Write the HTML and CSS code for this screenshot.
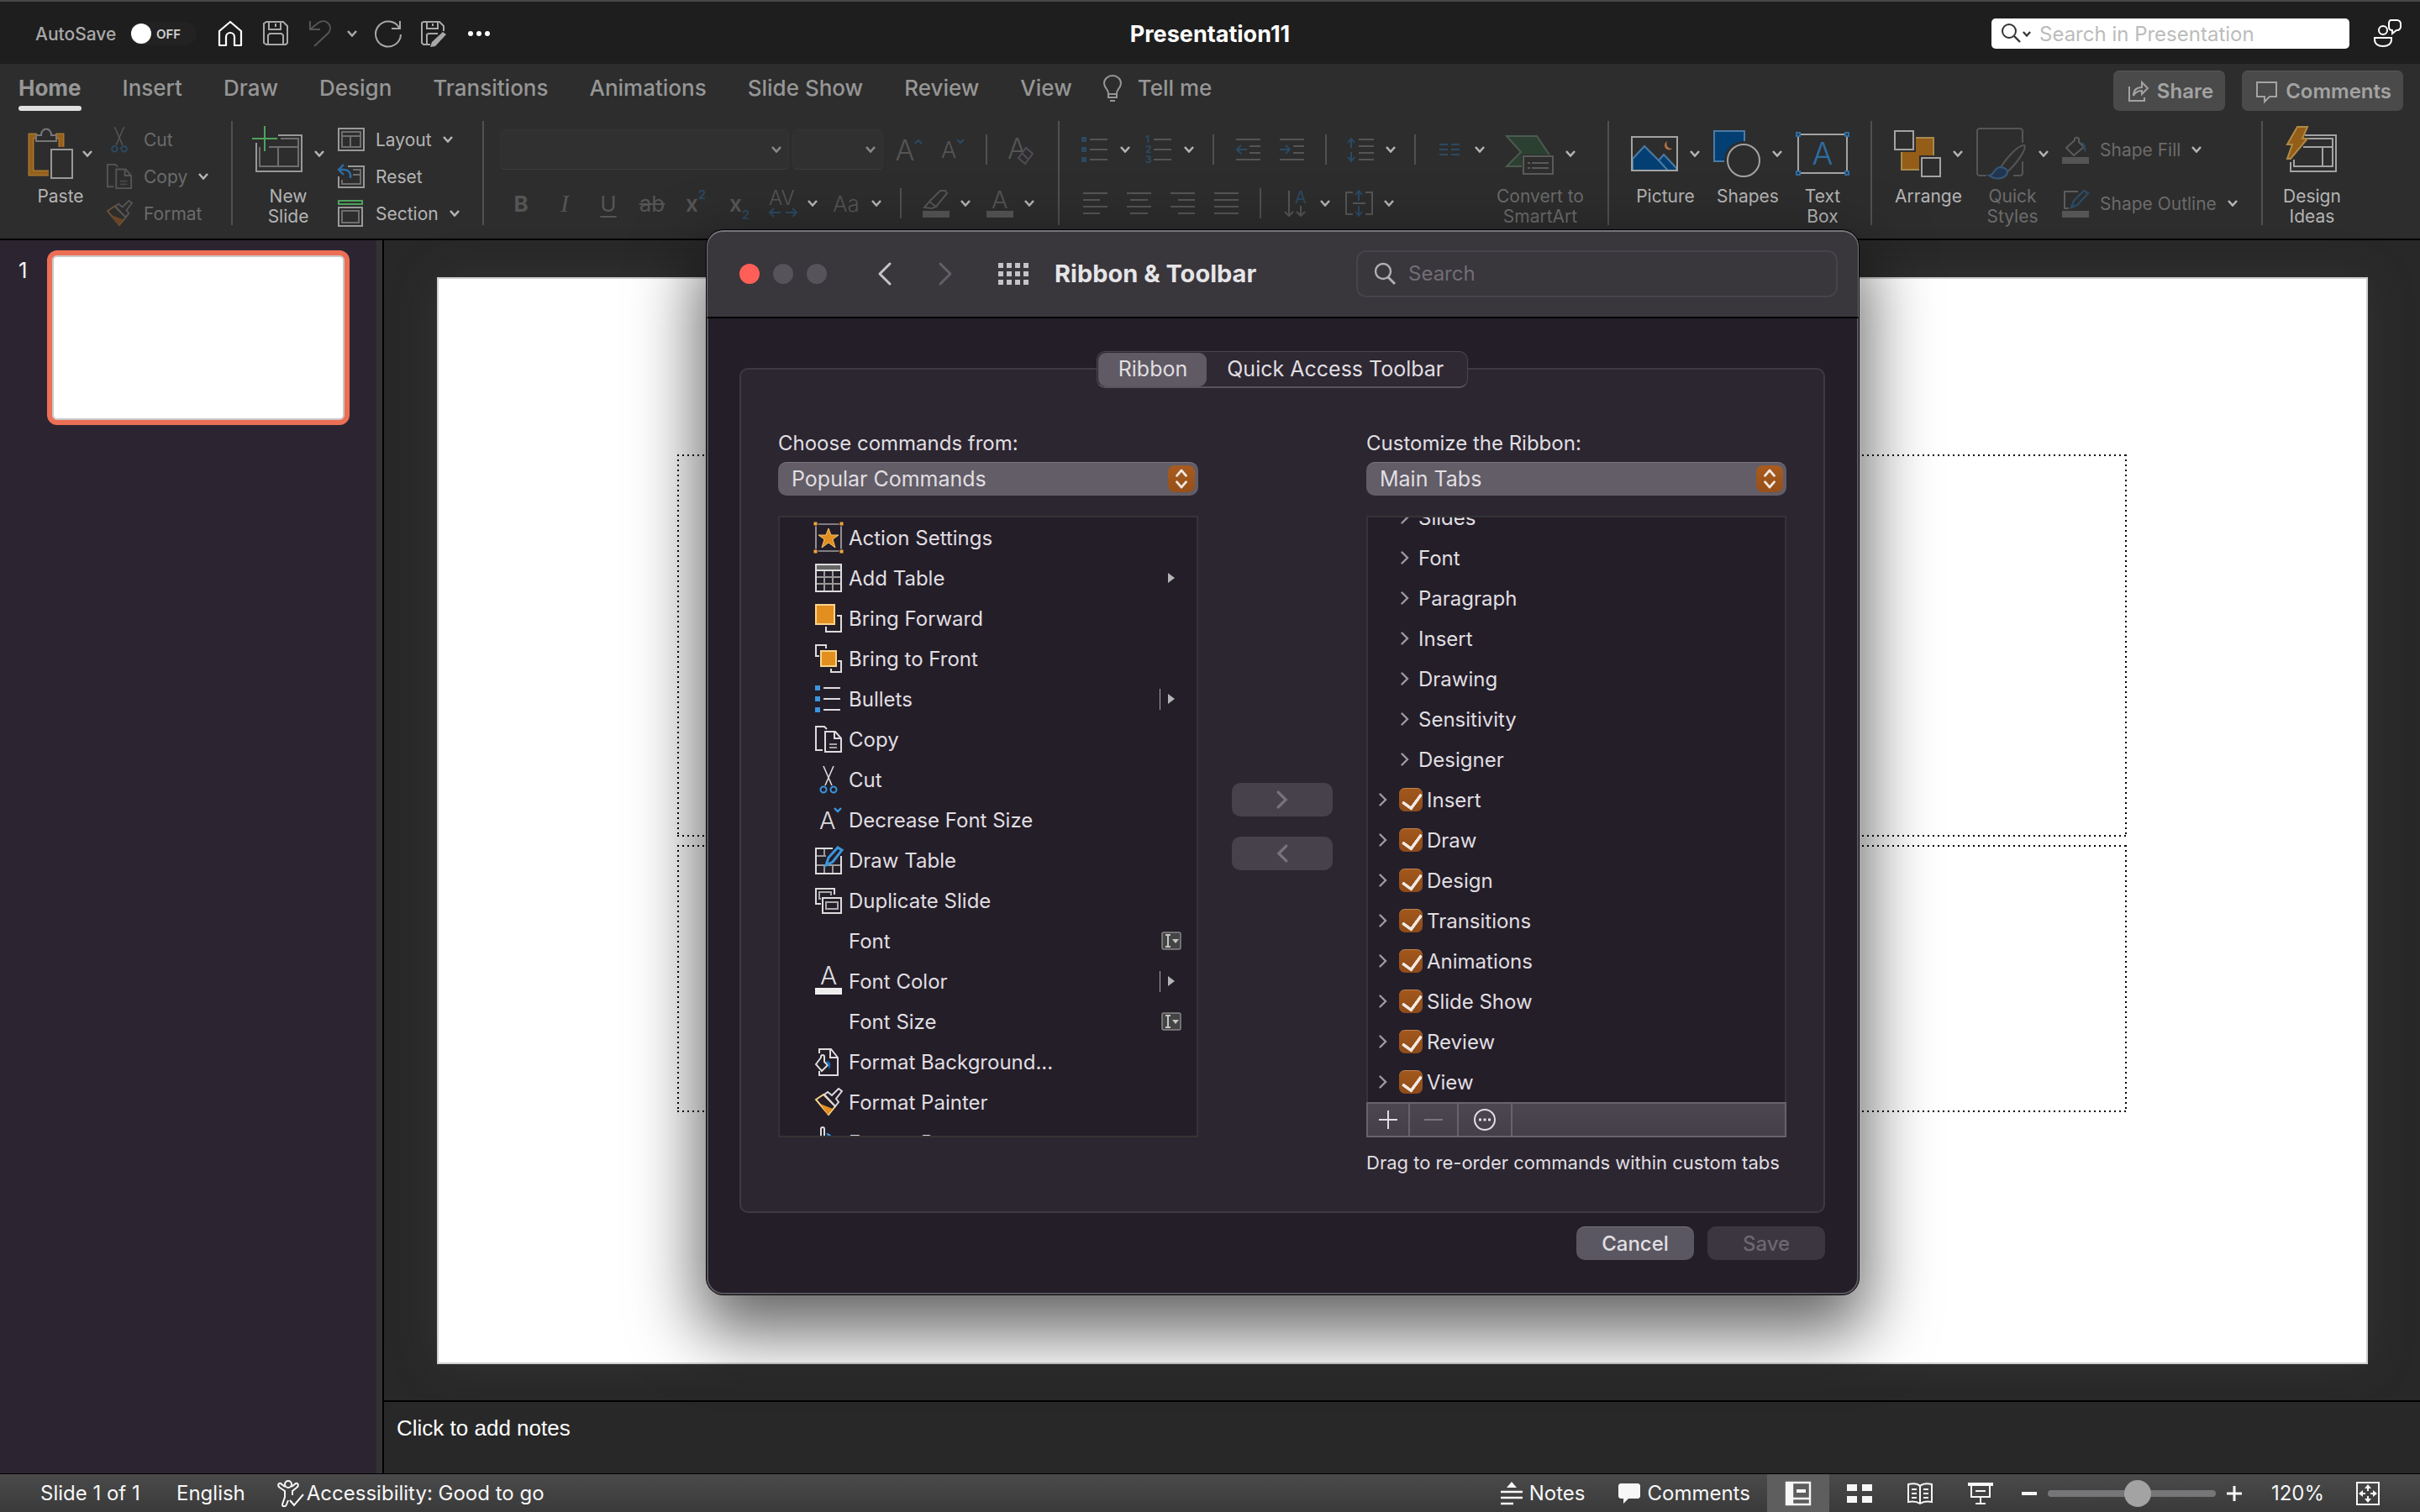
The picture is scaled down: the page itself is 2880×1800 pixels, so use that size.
FILE: index.html
```html
<!DOCTYPE html>
<html lang="en">

<head>
    <meta charset="UTF-8">
    <meta name="viewport" content="width=device-width, initial-scale=1.0">
    <title>Presentation11</title>
    <link rel="stylesheet" href="styles.css">
</head>

<body>

    <!-- Shared icons -->
    <svg class="sprite" width="0" height="0">
        <symbol id="chev" viewBox="0 0 12 8"><path d="M1 1l5 5.500 5-5.500" fill="none" stroke="currentColor" stroke-width="2.600"/></symbol>
        <symbol id="arrow" viewBox="0 0 10 16"><path d="M1.500 1.500l6.500 6.500-6.500 6.500" fill="none" stroke="currentColor" stroke-width="2.400" stroke-linecap="round"/></symbol>
        <symbol id="updown" viewBox="0 0 16 26"><path d="M2 9l6-7 6 7M2 17l6 7 6-7" fill="none" stroke="currentColor" stroke-width="3" stroke-linecap="round" stroke-linejoin="round"/></symbol>
        <symbol id="copy" viewBox="0 0 34 34"><path d="M10 30H2V2h10l3 3M13 8h12l7 8v16H13zM24 8v8h8" fill="none" stroke="currentColor" stroke-width="2"/><path d="M18 23h9M18 27h9" stroke="currentColor" stroke-width="2" opacity=".7"/></symbol>
        <symbol id="cut" viewBox="0 0 34 34"><path d="M11 1l10 23M23 1L13 24" fill="none" stroke="currentColor" stroke-width="1.600"/><circle cx="11" cy="29" r="3.500" fill="none" stroke="var(--blue)" stroke-width="2"/><circle cx="23" cy="29" r="3.500" fill="none" stroke="var(--blue)" stroke-width="2"/></symbol>
        <symbol id="painter" viewBox="0 0 34 34"><path d="M2 14l9-6 14 14-8 10z" fill="none" stroke="var(--gold)" stroke-width="2"/><path d="M7 19l15 6-6 7z" fill="var(--orange)"/><path d="M12 8l4-3 5 4 8-8 4 3-7 9 3 4-4 5z" fill="var(--bg)" stroke="currentColor" stroke-width="2"/></symbol>
        <symbol id="combo" viewBox="0 0 24 22"><rect x="1" y="1" width="22" height="20" rx="2" fill="#444" stroke="#868686" stroke-width="1.500"/><path d="M5 4h6M5 18h6M8 4v14" stroke="#c4c4c4" stroke-width="2"/><path d="M13 9h8l-4 5z" fill="#c4c4c4"/></symbol>
    </svg>

    <!-- Title bar -->
    <header class="titlebar">
        <div class="quick-access">
            <label class="autosave" for="autosave">AutoSave</label>
            <button class="toggle" id="autosave" type="button"><span class="knob"></span>OFF</button>
            <button class="qa bright" type="button" aria-label="Home"><svg width="30" height="32" viewBox="0 0 30 32"><path d="M2 13L15 2l13 11v17h-8V20a5 5 0 0 0-10 0v10H2z" fill="none" stroke="currentColor" stroke-width="2.200" stroke-linejoin="round"/></svg></button>
            <button class="qa" type="button" aria-label="Save"><svg width="30" height="30" viewBox="0 0 30 30"><path d="M4 1h20l5 5v20l-2 2H4l-3-2V3zM7 1v9h14V1M15 3v4M6 28V17l2-2h14l2 2v11" fill="none" stroke="currentColor" stroke-width="2"/></svg></button>
            <button class="qa dim" type="button" aria-label="Undo"><svg width="30" height="34" viewBox="0 0 30 34"><path d="M2 2v10h12M2 12L12 4c9-6 18 4 12 12L7 32" fill="none" stroke="currentColor" stroke-width="2"/></svg></button>
            <button class="qa narrow" type="button" aria-label="Undo history"><svg width="12" height="8"><use href="#chev"/></svg></button>
            <button class="qa" type="button" aria-label="Redo"><svg width="34" height="34" viewBox="0 0 34 34"><path d="M31 2v9H21M30 10A15 15 0 1 0 32 18" fill="none" stroke="currentColor" stroke-width="2"/></svg></button>
            <button class="qa" type="button" aria-label="Save as"><svg width="32" height="32" viewBox="0 0 32 32"><path d="M12 29H4l-2-2V3l2-1h19l5 5v6M8 2v8h13V2M15 4v3M8 29V17l2-1h11" fill="none" stroke="currentColor" stroke-width="2"/><path d="M27 14l4 3-13 14-6 1 2-6z" fill="currentColor"/></svg></button>
            <button class="qa bright" type="button" aria-label="More"><svg width="28" height="8" viewBox="0 0 28 8"><circle cx="4" cy="4" r="3"/><circle cx="14" cy="4" r="3"/><circle cx="24" cy="4" r="3"/></svg></button>
        </div>
        <h1 class="doc-title">Presentation11</h1>
        <div class="title-right">
            <label class="doc-search">
                <svg width="24" height="24" viewBox="0 0 24 24"><circle cx="10" cy="9" r="8" fill="none" stroke="#333" stroke-width="2"/><path d="M16 15l7 7" stroke="#333" stroke-width="2.400"/></svg>
                <svg width="10" height="7"><use href="#chev"/></svg>
                <input type="text" placeholder="Search in Presentation" aria-label="Search in Presentation">
            </label>
            <button class="people" type="button" aria-label="Share feedback"><svg width="34" height="34" viewBox="0 0 34 34"><g fill="none" stroke="currentColor" stroke-width="2"><circle cx="12" cy="13" r="5"/><path d="M2 22h20v2c0 5-4 8-10 8S2 29 2 24zM21 1h8c2 0 4 2 4 4v4c0 2-2 4-4 4h-1l-5 4v-4c-3 0-4-2-4-4V5c0-2 1-4 2-4z"/></g></svg></button>
        </div>
    </header>

    <!-- Ribbon -->
    <section class="ribbon">
        <nav class="tabs">
            <a class="tab active" href="#">Home</a>
            <a class="tab" href="#">Insert</a>
            <a class="tab" href="#">Draw</a>
            <a class="tab" href="#">Design</a>
            <a class="tab" href="#">Transitions</a>
            <a class="tab" href="#">Animations</a>
            <a class="tab" href="#">Slide Show</a>
            <a class="tab" href="#">Review</a>
            <a class="tab" href="#">View</a>
            <a class="tab tell" href="#"><svg width="24" height="32" viewBox="0 0 24 32"><path d="M7 22c0-5-5-6-5-12a10 9 0 0 1 20 0c0 6-5 7-5 12v5H7zM7 23h10M9 31h6" fill="none" stroke="currentColor" stroke-width="2"/></svg>Tell me</a>
            <div class="tab-actions">
                <button class="pill" type="button"><svg width="26" height="26" viewBox="0 0 26 26"><path d="M2 7v17h18v-4M7 18c0-7 4-10 10-10V2l7 7-7 7v-4c-5 0-8 2-10 6z" fill="none" stroke="currentColor" stroke-width="2"/></svg>Share</button>
                <button class="pill" type="button"><svg width="26" height="26" viewBox="0 0 26 26"><path d="M1 2h23v17h-8l-6 6v-6H1z" fill="none" stroke="currentColor" stroke-width="2"/></svg>Comments</button>
            </div>
        </nav>

        <div class="groups">
            <div class="group clipboard">
                <button class="big" type="button">
                    <span class="big-icon"><svg width="54" height="62" viewBox="0 0 54 62"><path d="M24 54H3V10h7M32 10h7v13" fill="none" stroke="#a8762f" stroke-width="7"/><path d="M24 54H3V10h7M32 10h7v13" fill="none" stroke="#94601c" stroke-width="4"/><path d="M9 16V9h6c0-10 12-10 12 0h6v7z" fill="#2d2d2d" stroke="#777" stroke-width="2"/><path d="M27 26h25v34H27z" fill="#2d2d2d" stroke="#999" stroke-width="2"/></svg><svg width="12" height="8"><use href="#chev"/></svg></span>
                    <span>Paste</span>
                </button>
                <div class="stack">
                    <button class="small off" type="button"><svg width="32" height="32"><use href="#cut"/></svg>Cut</button>
                    <button class="small off" type="button"><svg width="32" height="32"><use href="#copy"/></svg>Copy<svg class="caret" width="12" height="8"><use href="#chev"/></svg></button>
                    <button class="small off" type="button"><svg width="32" height="32"><use href="#painter"/></svg>Format</button>
                </div>
            </div>

            <div class="group slides">
                <button class="big" type="button">
                    <span class="big-icon"><svg width="60" height="66" viewBox="0 0 60 66"><path d="M31 11h28v43H5V20" fill="none" stroke="#999" stroke-width="2"/><path d="M34 15h21v33H9V25M20 25h35M31 25v23" fill="none" stroke="#6e6e6e" stroke-width="2"/><path d="M15 0v30M0 15h30" stroke="#4fa25c" stroke-width="2"/></svg><svg width="12" height="8"><use href="#chev"/></svg></span>
                    <span>New<br>Slide</span>
                </button>
                <div class="stack">
                    <button class="small" type="button"><svg width="32" height="28" viewBox="0 0 32 28"><path d="M1 1h30v26H1z" fill="none" stroke="#999" stroke-width="2"/><path d="M5 5h22v18H5zM5 10h22M15 10v13" fill="none" stroke="#6e6e6e" stroke-width="2"/></svg>Layout<svg class="caret" width="12" height="8"><use href="#chev"/></svg></button>
                    <button class="small" type="button"><svg width="32" height="30" viewBox="0 0 32 30"><path d="M12 3h19v25H1V15" fill="none" stroke="#999" stroke-width="2"/><path d="M18 7h9v17H5v-5M18 13h9" fill="none" stroke="#6e6e6e" stroke-width="2"/><path d="M7 1L1 7l6 6M1 7h6c6 0 9 4 8 10" fill="none" stroke="#2d6da3" stroke-width="2.400"/></svg>Reset</button>
                    <button class="small" type="button"><svg width="32" height="32" viewBox="0 0 32 32"><path d="M1 1h28v4H1z" fill="none" stroke="#4fa25c" stroke-width="2"/><path d="M1 9h28v22H1z" fill="none" stroke="#999" stroke-width="2"/><path d="M5 13h20v14H5z" fill="none" stroke="#6e6e6e" stroke-width="2"/></svg>Section<svg class="caret" width="12" height="8"><use href="#chev"/></svg></button>
                </div>
            </div>

            <div class="group font">
                <div class="tools">
                    <div class="tool-row">
                        <div class="fields">
                            <button class="field face" type="button" aria-label="Font name"><svg width="12" height="8"><use href="#chev"/></svg></button>
                            <button class="field size" type="button" aria-label="Font size"><svg width="12" height="8"><use href="#chev"/></svg></button>
                        </div>
                        <button class="tool grow" type="button">A<svg width="10" height="7" viewBox="0 0 10 7"><path d="M1 6l4-4 4 4" fill="none" stroke="#2c4a63" stroke-width="2"/></svg></button>
                        <button class="tool shrink" type="button">A<svg width="10" height="7" viewBox="0 0 10 7"><path d="M1 1l4 4 4-4" fill="none" stroke="#2c4a63" stroke-width="2"/></svg></button>
                        <i class="rule"></i>
                        <button class="tool" type="button" aria-label="Clear formatting"><svg width="34" height="34" viewBox="0 0 34 34"><text class="glyph" x="0" y="28" font-size="34">A</text><path d="M13 27l9-12 8 7-9 12zM17 21l7 7" fill="#2d2d2d" stroke="#524a56" stroke-width="2"/></svg></button>
                    </div>
                    <div class="tool-row">
                        <button class="tool bold" type="button">B</button>
                        <button class="tool italic" type="button">I</button>
                        <button class="tool under" type="button">U</button>
                        <button class="tool strike" type="button">ab</button>
                        <button class="tool script" type="button">x<sup>2</sup></button>
                        <button class="tool script" type="button">x<sub>2</sub></button>
                        <button class="drop" type="button"><svg width="34" height="34" viewBox="0 0 34 34"><text class="glyph" x="0" y="19" font-size="24">AV</text><path d="M1 28h13M6 23l-5 5 5 5M33 28H20M28 23l5 5-5 5" fill="none" stroke="#2c4a63" stroke-width="2"/></svg><svg width="12" height="8"><use href="#chev"/></svg></button>
                        <button class="drop" type="button"><svg width="34" height="34" viewBox="0 0 34 34"><text class="glyph" x="0" y="27" font-size="26">Aa</text></svg><svg width="12" height="8"><use href="#chev"/></svg></button>
                        <i class="rule"></i>
                        <button class="drop" type="button"><svg width="34" height="34" viewBox="0 0 34 34"><path d="M3 22l6-7 8 6-5 2zM9 15L22 2h6l2 3-13 16z" fill="none" stroke="#555" stroke-width="2"/><path d="M1 26h32v8H1z" fill="#555"/></svg><svg width="12" height="8"><use href="#chev"/></svg></button>
                        <button class="drop" type="button"><svg width="34" height="34" viewBox="0 0 34 34"><text class="glyph" x="7" y="23" font-size="29">A</text><path d="M1 26h32v8H1z" fill="#555"/></svg><svg width="12" height="8"><use href="#chev"/></svg></button>
                    </div>
                </div>
            </div>

            <div class="group paragraph">
                <div class="tools">
                    <div class="tool-row">
                        <button class="drop" type="button"><svg width="34" height="34" viewBox="0 0 34 34"><path d="M0 2h6v6H0zM0 14h6v6H0zM0 26h6v6H0z" fill="#2c4a63"/><path d="M10 5h21M10 17h21M10 29h21" stroke="#555" stroke-width="2"/></svg><svg width="12" height="8"><use href="#chev"/></svg></button>
                        <button class="drop" type="button"><svg width="34" height="34" viewBox="0 0 34 34"><g fill="#2c4a63" font-size="12" font-weight="700"><text x="0" y="9">1</text><text x="0" y="21">2</text><text x="0" y="33">3</text></g><path d="M10 5h21M10 17h21M10 29h21" stroke="#555" stroke-width="2"/></svg><svg width="12" height="8"><use href="#chev"/></svg></button>
                        <i class="rule"></i>
                        <button class="tool" type="button" aria-label="Outdent"><svg width="34" height="34" viewBox="0 0 34 34"><path d="M2 5h29M18 13h13M18 21h13M2 29h29" stroke="#555" stroke-width="2"/><path d="M15 17H3M8 12l-5 5 5 5" fill="none" stroke="#2c4a63" stroke-width="2"/></svg></button>
                        <button class="tool" type="button" aria-label="Indent"><svg width="34" height="34" viewBox="0 0 34 34"><path d="M2 5h29M18 13h13M18 21h13M2 29h29" stroke="#555" stroke-width="2"/><path d="M2 17h12M9 12l5 5-5 5" fill="none" stroke="#2c4a63" stroke-width="2"/></svg></button>
                        <i class="rule"></i>
                        <button class="drop" type="button"><svg width="34" height="34" viewBox="0 0 34 34"><path d="M14 5h18M14 13h18M14 21h18M14 29h18" stroke="#555" stroke-width="2"/><path d="M5 5v10M1 9l4-5 4 5M5 20v11M1 26l4 5 4-5" fill="none" stroke="#2c4a63" stroke-width="2"/></svg><svg width="12" height="8"><use href="#chev"/></svg></button>
                        <i class="rule"></i>
                        <button class="drop" type="button"><svg width="34" height="34" viewBox="0 0 34 34"><path d="M4 11h10M4 17h10M4 23h10M18 11h10M18 17h10M18 23h10" stroke="#2c4a63" stroke-width="2"/></svg><svg width="12" height="8"><use href="#chev"/></svg></button>
                    </div>
                    <div class="tool-row">
                        <button class="tool" type="button" aria-label="Align left"><svg width="34" height="34" viewBox="0 0 34 34"><path d="M2 5h29M2 13h20M2 21h29M2 29h20" stroke="#555" stroke-width="2"/></svg></button>
                        <button class="tool" type="button" aria-label="Center"><svg width="34" height="34" viewBox="0 0 34 34"><path d="M2 5h29M6 13h21M2 21h29M6 29h21" stroke="#555" stroke-width="2"/></svg></button>
                        <button class="tool" type="button" aria-label="Align right"><svg width="34" height="34" viewBox="0 0 34 34"><path d="M2 5h29M11 13h20M2 21h29M11 29h20" stroke="#555" stroke-width="2"/></svg></button>
                        <button class="tool" type="button" aria-label="Justify"><svg width="34" height="34" viewBox="0 0 34 34"><path d="M2 5h29M2 13h29M2 21h29M2 29h29" stroke="#555" stroke-width="2"/></svg></button>
                        <i class="rule"></i>
                        <button class="drop" type="button"><svg width="34" height="34" viewBox="0 0 34 34"><path d="M9 2v30M4 27l5 5 5-5M23 20v12M18 27l5 5 5-5" fill="none" stroke="#555" stroke-width="2"/><text x="16" y="17" font-size="20" fill="#2c4a63">A</text></svg><svg width="12" height="8"><use href="#chev"/></svg></button>
                        <button class="drop" type="button"><svg width="34" height="34" viewBox="0 0 34 34"><path d="M9 4H1v26h8M24 4h8v26h-8M9 17h15" fill="none" stroke="#555" stroke-width="2"/><path d="M16 2v12M12 7l4-5 4 5M16 20v12M12 27l4 5 4-5" fill="none" stroke="#2c4a63" stroke-width="2"/></svg><svg width="12" height="8"><use href="#chev"/></svg></button>
                    </div>
                </div>
                <button class="big off smartart" type="button">
                    <span class="big-icon"><svg width="58" height="50" viewBox="0 0 58 50"><path d="M2 4h36l16 24v12H20V40H2l17-17z" fill="#2b4030" stroke="#4d5a50" stroke-width="2"/><path d="M20 26h38v24H20z" fill="#2d2d2d"/><path d="M22 28h35v21H22z" fill="#2d2d2d" stroke="#5a5a5a" stroke-width="2"/><path d="M27 36h3M32 36h20M27 42h3M32 42h20" stroke="#5a5a5a" stroke-width="2"/></svg><svg width="12" height="8"><use href="#chev"/></svg></span>
                    <span>Convert to<br>SmartArt</span>
                </button>
            </div>

            <div class="group insert">
                <button class="big" type="button">
                    <span class="big-icon"><svg width="56" height="42" viewBox="0 0 56 42"><path d="M2 27l14-15 17 17 6-7 15 16v3H2z" fill="#043f73" stroke="#4b7ba5" stroke-width="2"/><path d="M33 29l11 12" stroke="#4b7ba5" stroke-width="2"/><path d="M1 1h54v40H1z" fill="none" stroke="#a3a3a3" stroke-width="2"/><path d="M43 6c-2 5 1 9 6 9-3 3-9 1-9-4 0-2 1-4 3-5z" fill="#b87142"/></svg><svg width="12" height="8"><use href="#chev"/></svg></span>
                    <span>Picture</span>
                </button>
                <button class="big" type="button">
                    <span class="big-icon"><svg width="56" height="56" viewBox="0 0 56 56"><path d="M1 1h36v36H1z" fill="#043f73" stroke="#4b7ba5" stroke-width="2"/><circle cx="36" cy="36" r="23" fill="#2d2d2d"/><circle cx="36" cy="36" r="19" fill="none" stroke="#a3a3a3" stroke-width="2"/></svg><svg width="12" height="8"><use href="#chev"/></svg></span>
                    <span>Shapes</span>
                </button>
                <button class="big" type="button">
                    <span class="big-icon"><svg width="64" height="52" viewBox="0 0 64 52"><path d="M3 3h58v46H3z" fill="none" stroke="#a3a3a3" stroke-width="2"/><path d="M1 1h4v4H1zM59 1h4v4h-4zM1 47h4v4H1zM59 47h4v4h-4z" fill="#2d2d2d" stroke="#2d6da3" stroke-width="2"/><text x="32" y="39" text-anchor="middle" font-size="37" font-weight="300" fill="#2d6da3">A</text></svg></span>
                    <span>Text<br>Box</span>
                </button>
            </div>

            <div class="group drawing">
                <button class="big" type="button">
                    <span class="big-icon"><svg width="56" height="56" viewBox="0 0 56 56"><path d="M9 9h38v38H9z" fill="#945d18" stroke="#a58a4e" stroke-width="2"/><path d="M0 0h26v26H0zM30 30h26v26H30z" fill="#2d2d2d"/><path d="M1 1h22v22H1zM33 33h22v22H33z" fill="#2d2d2d" stroke="#a3a3a3" stroke-width="2"/></svg><svg width="12" height="8"><use href="#chev"/></svg></span>
                    <span>Arrange</span>
                </button>
                <button class="big off" type="button">
                    <span class="big-icon"><svg width="60" height="62" viewBox="0 0 60 62"><path d="M12 57H3l-2-2V3l2-2h50l2 2v15M55 40v15l-2 2h-9" fill="none" stroke="#555" stroke-width="2"/><path d="M29 47c8-12 20-26 28-26 4 2-8 22-22 33z" fill="#2d2d2d" stroke="#555" stroke-width="2"/><path d="M15 57c6 0 6-10 14-10 8 1 10 6 6 10-5 5-15 4-20 0z" fill="#22354f" stroke="#36597a" stroke-width="2"/></svg><svg width="12" height="8"><use href="#chev"/></svg></span>
                    <span>Quick<br>Styles</span>
                </button>
                <div class="tools">
                    <button class="small tall off" type="button"><svg width="32" height="34" viewBox="0 0 32 34"><path d="M5 15L15 6V4a3 3 0 0 1 5 0v4l6 6-12 10z" fill="none" stroke="#5c5c5c" stroke-width="2"/><path d="M23 8c5 1 6 6 5 13-3-4-2-8-5-13z" fill="#2c4a63"/><path d="M0 26h32v8H0z" fill="#555"/></svg>Shape Fill<svg class="caret" width="12" height="8"><use href="#chev"/></svg></button>
                    <button class="small tall off" type="button"><svg width="32" height="34" viewBox="0 0 32 34"><path d="M19 3H3v20h5" fill="none" stroke="#5c5c5c" stroke-width="2"/><path d="M11 22l3-8L26 2l5 3-13 14z" fill="none" stroke="#2c4a63" stroke-width="2.400"/><path d="M0 26h32v8H0z" fill="#555"/></svg>Shape Outline<svg class="caret" width="12" height="8"><use href="#chev"/></svg></button>
                </div>
            </div>

            <div class="group designer">
                <button class="big" type="button">
                    <span class="big-icon"><svg width="60" height="66" viewBox="0 0 60 66"><path d="M22 11h37v43H5V43" fill="none" stroke="#a3a3a3" stroke-width="2"/><path d="M26 15h29v33H9V40M20 25h35M43 25v23" fill="none" stroke="#a3a3a3" stroke-width="2"/><path d="M13 1h12l-6 14h6L5 39H1l6-17H1z" fill="#945d18" stroke="#b08a45" stroke-width="2"/></svg></span>
                    <span>Design<br>Ideas</span>
                </button>
            </div>
        </div>
    </section>

    <!-- Workspace -->
    <main class="workspace">
        <aside class="thumbs">
            <span class="thumb-no">1</span>
            <div class="thumb"></div>
        </aside>
        <div class="stage">
            <div class="canvas">
                <div class="slide">
                    <div class="placeholder title-box"></div>
                    <div class="placeholder sub-box"></div>
                </div>
            </div>
            <div class="notes">Click to add notes</div>
        </div>
    </main>

    <!-- Status bar -->
    <footer class="status">
        <span class="slide-count">Slide 1 of 1</span>
        <button class="lang" type="button">English</button>
        <button class="a11y" type="button"><svg width="34" height="34" viewBox="0 0 34 34"><g fill="none" stroke="currentColor" stroke-width="2"><circle cx="14" cy="6" r="4"/><path d="M10 9L5 5C2 4 1 8 4 10l6 4v7L7 30c0 3 4 3 5 0l2-5M18 9l5-4c3-1 4 3 1 5l-5 4v5M16 25l5 6L32 18"/></g></svg>Accessibility: Good to go</button>
        <div class="status-right">
            <button class="st notes-btn" type="button"><svg width="26" height="28" viewBox="0 0 26 28"><path d="M13 0l6 7H7z" fill="currentColor"/><path d="M0 12h26M0 19h26M0 26h15" stroke="currentColor" stroke-width="2.400"/></svg>Notes</button>
            <button class="st comments-btn" type="button"><svg width="26" height="26" viewBox="0 0 26 26"><path d="M2 1h22l2 2v14l-2 2H12l-6 6v-6H2l-2-2V3z" fill="currentColor"/></svg>Comments</button>
            <button class="view on" type="button" aria-label="Normal"><svg width="30" height="28" viewBox="0 0 30 28"><path d="M1 1h28v26H1zM8 1v26M8 20h21" fill="none" stroke="currentColor" stroke-width="2.400"/><path d="M1 1h7v26H1zM13 9h11v4H13z" fill="currentColor"/></svg></button>
            <button class="view" type="button" aria-label="Slide sorter"><svg width="30" height="24" viewBox="0 0 30 24"><path d="M0 1h12v8H0zM18 1h12v8H18zM0 15h12v8H0zM18 15h12v8H18z" fill="currentColor"/></svg></button>
            <button class="view" type="button" aria-label="Reading view"><svg width="30" height="26" viewBox="0 0 30 26"><path d="M15 4c-3-3-9-3-14-2v21c5-1 11 0 14 2 3-2 9-3 14-2V2C24 1 18 1 15 4zv21M5 8h6M5 13h6M5 18h6M19 8h6M19 13h6M19 18h6" fill="none" stroke="currentColor" stroke-width="2"/></svg></button>
            <button class="view" type="button" aria-label="Slide show"><svg width="30" height="26" viewBox="0 0 30 26"><path d="M0 0h30v4H0z" fill="currentColor"/><path d="M4 3v14h22V3M9 10h12M15 17v8M9 25h12" fill="none" stroke="currentColor" stroke-width="2"/></svg></button>
            <button class="zoom-btn" type="button" aria-label="Zoom out"><svg width="18" height="18" viewBox="0 0 18 18"><path d="M0 9h18" stroke="currentColor" stroke-width="4"/></svg></button>
            <input class="zoom" type="range" min="0" max="100" value="54" aria-label="Zoom">
            <button class="zoom-btn" type="button" aria-label="Zoom in"><svg width="18" height="18" viewBox="0 0 18 18"><path d="M0 9h18M9 0v18" stroke="currentColor" stroke-width="3"/></svg></button>
            <button class="percent" type="button">120%</button>
            <button class="fit" type="button" aria-label="Fit slide"><svg width="28" height="28" viewBox="0 0 28 28"><path d="M1 1h26v26H1z" fill="none" stroke="currentColor" stroke-width="2"/><path d="M14 3l4 5h-8zM14 25l4-5h-8zM3 14l5-4v8zM25 14l-5-4v8z" fill="currentColor"/><path d="M14 7v4M14 17v4M7 14h4M17 14h4" stroke="currentColor" stroke-width="2"/></svg></button>
        </div>
    </footer>

    <!-- Preferences window -->
    <section class="dialog" role="dialog" aria-labelledby="dialog-title">
        <header class="dialog-head">
            <div class="lights"><span class="light red"></span><span class="light"></span><span class="light"></span></div>
            <button class="nav-btn" type="button" aria-label="Back"><svg width="18" height="28" viewBox="0 0 18 28"><path d="M15 2L3 14l12 12" fill="none" stroke="currentColor" stroke-width="3" stroke-linecap="round" stroke-linejoin="round"/></svg></button>
            <button class="nav-btn fwd" type="button" aria-label="Forward"><svg width="18" height="28" viewBox="0 0 18 28"><path d="M3 2l12 12L3 26" fill="none" stroke="currentColor" stroke-width="3" stroke-linecap="round" stroke-linejoin="round"/></svg></button>
            <button class="nav-btn grid-btn" type="button" aria-label="Show all"><svg width="36" height="26" viewBox="0 0 36 26"><path d="M0 0h6v6H0zM10 0h6v6h-6zM20 0h6v6h-6zM30 0h6v6h-6zM0 10h6v6H0zM10 10h6v6h-6zM20 10h6v6h-6zM30 10h6v6h-6zM0 20h6v6H0zM10 20h6v6h-6zM20 20h6v6h-6zM30 20h6v6h-6z" fill="currentColor"/></svg></button>
            <h2 id="dialog-title">Ribbon &amp; Toolbar</h2>
            <label class="dialog-search">
                <svg width="26" height="26" viewBox="0 0 26 26"><circle cx="11" cy="10" r="9" fill="none" stroke="currentColor" stroke-width="2.400"/><path d="M17 17l8 8" stroke="currentColor" stroke-width="3"/></svg>
                <input type="text" placeholder="Search" aria-label="Search">
            </label>
        </header>

        <div class="dialog-body">
            <div class="segmented">
                <button class="seg on" type="button">Ribbon</button>
                <button class="seg" type="button">Quick Access Toolbar</button>
            </div>

            <div class="panel">
                <label class="col-label left" for="commands">Choose commands from:</label>
                <label class="col-label right" for="ribbon-tabs">Customize the Ribbon:</label>
                <div class="picker left">
                    <select id="commands"><option>Popular Commands</option></select>
                    <span class="stepper"><svg width="16" height="24"><use href="#updown"/></svg></span>
                </div>
                <div class="picker right">
                    <select id="ribbon-tabs"><option>Main Tabs</option></select>
                    <span class="stepper"><svg width="16" height="24"><use href="#updown"/></svg></span>
                </div>

                <ul class="list commands left">
                    <li><span class="ci"><svg width="36" height="38" viewBox="0 0 36 38"><path d="M3 3h30v32H3z" fill="none" stroke="currentColor" stroke-width="1.200"/><path d="M0 0h5v5H0zM31 0h5v5h-5zM0 33h5v5H0zM31 33h5v5h-5z" fill="#f0a63c" stroke="#241e29"/><path d="M18 8l3 8h9l-7 5 3 10-8-6-8 6 3-10-7-5h9z" fill="#e38f20" stroke="#f5c56e"/></svg></span>Action Settings</li>
                    <li><span class="ci"><svg width="34" height="34" viewBox="0 0 34 34"><path d="M2 2h30v6H2z" fill="#666"/><path d="M2 16h30M2 24h30M12 8v24M22 8v24" stroke="#999" stroke-width="2"/><path d="M2 8h30M2 1h30v32H2z" fill="none" stroke="currentColor" stroke-width="2"/></svg></span>Add Table<span class="more"></span></li>
                    <li><span class="ci"><svg width="34" height="34" viewBox="0 0 34 34"><path d="M2 1h22v23H2z" fill="#e38f20" stroke="#f8d58a" stroke-width="2"/><path d="M27 14h5v19H14v-6" fill="none" stroke="currentColor" stroke-width="2"/></svg></span>Bring Forward</li>
                    <li><span class="ci"><svg width="34" height="34" viewBox="0 0 34 34"><path d="M14 5V1H2v13h4M28 20h4v13H20v-4" fill="none" stroke="currentColor" stroke-width="2"/><path d="M8 8h18v18H8z" fill="#e38f20" stroke="#f8d58a" stroke-width="2"/></svg></span>Bring to Front</li>
                    <li><span class="ci"><svg width="34" height="34" viewBox="0 0 34 34"><path d="M1 1h6v6H1zM1 14h6v6H1zM1 27h6v6H1z" fill="#3a96dd"/><path d="M11 4h20M11 17h20M11 30h20" stroke="currentColor" stroke-width="2"/></svg></span>Bullets<span class="more split"></span></li>
                    <li><span class="ci"><svg width="34" height="34"><use href="#copy"/></svg></span>Copy</li>
                    <li><span class="ci"><svg width="34" height="34"><use href="#cut"/></svg></span>Cut</li>
                    <li><span class="ci"><svg width="34" height="34" viewBox="0 0 34 34"><text x="6" y="28" font-size="29" font-weight="300" fill="currentColor">A</text><path d="M24 3l4 4 4-4" fill="none" stroke="#3a96dd" stroke-width="2.400"/></svg></span>Decrease Font Size</li>
                    <li><span class="ci"><svg width="34" height="34" viewBox="0 0 34 34"><path d="M2 12h12M2 23h30M12 3v8M12 23v9M22 23v9" stroke="#999" stroke-width="2"/><path d="M22 3H2v30h30V12" fill="none" stroke="currentColor" stroke-width="2"/><path d="M14 23l3-9L28 2l5 3-11 14z" fill="#241e29" stroke="#3a96dd" stroke-width="3"/></svg></span>Draw Table</li>
                    <li><span class="ci"><svg width="34" height="34" viewBox="0 0 34 34"><path d="M8 21H2V3h22v7" fill="none" stroke="currentColor" stroke-width="2"/><path d="M8 15H6V7h14v4M14 19h14v8H14z" fill="none" stroke="#aaa" stroke-width="2"/><path d="M10 14h22v18H10z" fill="none" stroke="currentColor" stroke-width="2"/></svg></span>Duplicate Slide</li>
                    <li><span class="ci"></span>Font<svg class="combo" width="24" height="22"><use href="#combo"/></svg></li>
                    <li><span class="ci"><svg width="34" height="34" viewBox="0 0 34 34"><text x="7" y="21" font-size="30" font-weight="300" fill="currentColor">A</text><path d="M1 25h32v8H1z" fill="#eee"/></svg></span>Font Color<span class="more split"></span></li>
                    <li><span class="ci"></span>Font Size<svg class="combo" width="24" height="22"><use href="#combo"/></svg></li>
                    <li><span class="ci"><svg width="34" height="34" viewBox="0 0 34 34"><path d="M6 7V2h14l8 10v21H6v-5M19 2v10h9" fill="none" stroke="currentColor" stroke-width="2"/><path d="M2 20l6-8v-1a2 2 0 0 1 4 0v6l4 4-7 7z" fill="#241e29" stroke="currentColor" stroke-width="2"/><path d="M14 16c6 0 6 4 4 10-2-4-1-7-4-10z" fill="#0f6cbd"/></svg></span>Format Background...</li>
                    <li><span class="ci"><svg width="34" height="34"><use href="#painter"/></svg></span>Format Painter</li>
                    <li><span class="ci"><svg width="34" height="38" viewBox="0 0 34 38"><path d="M2 18l6-7V3a2 2 0 0 1 4 0v8l7 7-9 9z" fill="none" stroke="currentColor" stroke-width="2"/><path d="M14 8c6 0 9 5 7 12-3-4-4-8-7-12z" fill="#3a96dd"/></svg></span>Format Pane</li>
                </ul>

                <div class="move">
                    <button type="button" aria-label="Add"><svg width="14" height="22"><use href="#arrow"/></svg></button>
                    <button class="flip" type="button" aria-label="Remove"><svg width="14" height="22"><use href="#arrow"/></svg></button>
                </div>

                <div class="tree-box right">
                    <ul class="list tree">
                        <li class="sub"><svg width="10" height="16"><use href="#arrow"/></svg>Slides</li>
                        <li class="sub"><svg width="10" height="16"><use href="#arrow"/></svg>Font</li>
                        <li class="sub"><svg width="10" height="16"><use href="#arrow"/></svg>Paragraph</li>
                        <li class="sub"><svg width="10" height="16"><use href="#arrow"/></svg>Insert</li>
                        <li class="sub"><svg width="10" height="16"><use href="#arrow"/></svg>Drawing</li>
                        <li class="sub"><svg width="10" height="16"><use href="#arrow"/></svg>Sensitivity</li>
                        <li class="sub"><svg width="10" height="16"><use href="#arrow"/></svg>Designer</li>
                        <li><svg width="10" height="16"><use href="#arrow"/></svg><label><input type="checkbox" checked>Insert</label></li>
                        <li><svg width="10" height="16"><use href="#arrow"/></svg><label><input type="checkbox" checked>Draw</label></li>
                        <li><svg width="10" height="16"><use href="#arrow"/></svg><label><input type="checkbox" checked>Design</label></li>
                        <li><svg width="10" height="16"><use href="#arrow"/></svg><label><input type="checkbox" checked>Transitions</label></li>
                        <li><svg width="10" height="16"><use href="#arrow"/></svg><label><input type="checkbox" checked>Animations</label></li>
                        <li><svg width="10" height="16"><use href="#arrow"/></svg><label><input type="checkbox" checked>Slide Show</label></li>
                        <li><svg width="10" height="16"><use href="#arrow"/></svg><label><input type="checkbox" checked>Review</label></li>
                        <li><svg width="10" height="16"><use href="#arrow"/></svg><label><input type="checkbox" checked>View</label></li>
                    </ul>
                    <div class="tree-bar">
                        <button class="add" type="button" aria-label="Add tab"><svg width="22" height="22" viewBox="0 0 22 22"><path d="M0 11h22M11 0v22" stroke="currentColor" stroke-width="2"/></svg></button>
                        <button class="remove" type="button" aria-label="Remove tab"><svg width="22" height="22" viewBox="0 0 22 22"><path d="M0 11h22" stroke="currentColor" stroke-width="2"/></svg></button>
                        <button class="opts" type="button" aria-label="Options"><svg width="28" height="28" viewBox="0 0 28 28"><circle cx="14" cy="14" r="12" fill="none" stroke="currentColor" stroke-width="2"/><path d="M7 14h3M12.500 14h3M18 14h3" stroke="currentColor" stroke-width="3"/></svg></button>
                    </div>
                </div>
                <p class="hint right">Drag to re-order commands within custom tabs</p>
            </div>

            <div class="dialog-actions">
                <button class="btn" type="button">Cancel</button>
                <button class="btn" type="button" disabled>Save</button>
            </div>
        </div>
    </section>

</body>

</html>
```
FILE: styles.css
```css
* {
    box-sizing: border-box;
}

body {
    --blue: #3a96dd;
    --gold: #f8d58a;
    --orange: #e38f20;
    --bg: #241e29;
    margin: 0;
    height: 100vh;
    display: flex;
    flex-direction: column;
    position: relative;
    overflow: hidden;
    background: #282828;
    color: #e0dfe1;
    font-family: Inter, "Liberation Sans", sans-serif;
    font-size: 24px;
}

button,
input,
select {
    font: inherit;
    color: inherit;
    background: none;
    border: 0;
    margin: 0;
    padding: 0;
}

button {
    display: flex;
    align-items: center;
    justify-content: center;
    flex: none;
    white-space: nowrap;
}

input {
    min-width: 0;
    outline: 0;
}

svg {
    display: block;
    flex: none;
    overflow: visible;
}

svg text {
    font-family: Inter, sans-serif;
}

.sprite {
    position: absolute;
}

/* Title bar */
.titlebar {
    flex: none;
    height: 76px;
    border-top: 2px solid #484848;
    background: #1e1e1e;
    display: grid;
    grid-template-columns: 1fr auto 1fr;
    align-items: center;
    padding: 2px 22px 0;
}

.quick-access {
    display: flex;
    align-items: center;
    padding-left: 20px;
    color: #a8a8a8;
}

.autosave {
    font-size: 21px;
    font-weight: 500;
    width: 112px;
}

.toggle {
    width: 80px;
    height: 28px;
    justify-content: flex-start;
    gap: 6px;
    padding-left: 2px;
    margin-right: 23px;
    border-radius: 14px;
    background: #222;
    font-size: 15px;
    font-weight: 600;
    color: #d0d0d0;
}

.knob {
    width: 24px;
    height: 24px;
    border-radius: 50%;
    background: #fff;
}

.qa {
    width: 34px;
    margin-right: 20px;
}

.qa.narrow {
    width: 12px;
}

.qa.bright {
    color: #fff;
    fill: #fff;
}

.qa.dim {
    color: #555;
    margin-right: 14px;
}

.doc-title {
    margin: 0;
    font-size: 27px;
    font-weight: 700;
    color: #fff;
}

.title-right {
    display: flex;
    justify-content: flex-end;
    align-items: center;
    gap: 28px;
}

.doc-search {
    width: 426px;
    height: 36px;
    border-radius: 5px;
    background: #fff;
    color: #333;
    display: flex;
    align-items: center;
    padding-left: 11px;
    gap: 2px;
}

.doc-search input {
    flex: 1;
    margin-left: 8px;
    font-size: 24px;
}

.doc-search input::placeholder {
    color: #bcbcbc;
    opacity: 1;
}

.people {
    color: #fff;
}

/* Ribbon */
.ribbon {
    flex: none;
    height: 210px;
    background: #2d2d2d;
    border-bottom: 2px solid #000;
    --blue: #2c4a63;
    --gold: #6b5236;
    --orange: #6b4426;
    --bg: #2d2d2d;
}

.tabs {
    height: 68px;
    display: flex;
    align-items: flex-start;
    gap: 49px;
    padding: 0 20px 0 22px;
}

.tab {
    padding-top: 13px;
    line-height: 32px;
    font-size: 26px;
    font-weight: 500;
    color: #969696;
    text-decoration: none;
}

.tab.active {
    font-weight: 700;
}

.tab.active::after {
    content: "";
    display: block;
    height: 6px;
    margin-top: 5px;
    border-radius: 3px;
    background: #e0e0e0;
}

.tab.tell {
    display: flex;
    gap: 18px;
    margin-left: -13px;
}

.tab-actions {
    margin-left: auto;
    padding-top: 8px;
    display: flex;
    gap: 20px;
}

.pill {
    height: 48px;
    padding: 0 14px 0 17px;
    gap: 9px;
    border-radius: 7px;
    border-top: 1px solid #585858;
    background: #4a4a4a;
    color: #a3a3a3;
    font-size: 24px;
    font-weight: 600;
}

.groups {
    display: flex;
    font-size: 21px;
    font-weight: 400;
    color: #b4b4b4;
}

.group {
    flex: none;
    height: 124px;
    display: flex;
    gap: 16px;
    border-right: 2px solid #505050;
}

.clipboard {
    width: 277px;
    padding-left: 34px;
}

.slides {
    width: 299px;
    padding-left: 23px;
}

.font {
    width: 685px;
    padding-left: 19px;
}

.paragraph {
    width: 654px;
    padding-left: 26px;
}

.insert {
    width: 313px;
    padding-left: 26px;
}

.drawing {
    width: 465px;
    padding-left: 26px;
}

.designer {
    padding-left: 24px;
    border-right: 0;
}

.big {
    align-self: flex-start;
    flex-direction: column;
    justify-content: flex-start;
    line-height: 24px;
}

.big-icon {
    height: 78px;
    display: flex;
    align-items: center;
    gap: 14px;
}

.clipboard .big-icon {
    gap: 10px;
}

.off {
    color: #6b6b6b;
}

.off use[href="#chev"],
.drop use {
    color: #b4b4b4;
}

.field use {
    color: #8a8a8a;
}

.smartart {
    margin-left: -2px;
}

.small {
    height: 44px;
    gap: 13px;
    justify-content: flex-start;
}

.small.tall {
    height: 48px;
}

.stack .off svg:first-child {
    color: #555;
}

.tools {
    padding-top: 10px;
    display: flex;
    flex-direction: column;
    gap: 16px;
}

.tool-row {
    height: 48px;
    display: flex;
    align-items: center;
    gap: 18px;
}

.font .tool-row:last-child {
    padding-left: 8px;
}

.rule {
    width: 2px;
    height: 36px;
    margin: 0 6px 0 4px;
    background: #505050;
}

.fields {
    display: flex;
    gap: 4px;
    margin-right: -4px;
}

.field {
    height: 48px;
    justify-content: flex-end;
    padding-right: 8px;
    border: 1px solid #343434;
    border-bottom-color: #3c3c3c;
    border-radius: 6px;
    background: #303030;
}

.face {
    width: 344px;
}

.size {
    width: 108px;
}

.tool {
    width: 34px;
    height: 48px;
    color: #555;
    font-size: 26px;
}

.glyph {
    fill: #555;
    font-weight: 300;
}

.grow,
.shrink {
    font-size: 34px;
    font-weight: 300;
}

.grow svg,
.shrink svg {
    margin-bottom: 20px;
}

.shrink {
    font-size: 27px;
}

.bold {
    font-weight: 700;
}

.italic {
    font-family: "Liberation Serif", serif;
    font-style: italic;
    font-size: 30px;
}

.under {
    text-decoration: underline;
    text-underline-offset: 5px;
}

.strike {
    text-decoration: line-through;
}

.script {
    font-weight: 600;
}

.script sup,
.script sub {
    font-size: 15px;
    color: #2c4a63;
}

.script sup {
    margin-bottom: 22px;
}

.script sub {
    margin-top: 26px;
}

.drop {
    height: 48px;
    gap: 12px;
}

/* Workspace */
.workspace {
    flex: 1;
    min-height: 0;
    display: flex;
}

.thumbs {
    width: 448px;
    flex: none;
    display: flex;
    align-items: flex-start;
    gap: 18px;
    padding: 12px 32px 0 22px;
    background: #2c2531;
}

.thumb-no {
    padding-top: 8px;
    width: 16px;
    font-size: 26px;
    color: #f0f0f0;
}

.thumb {
    flex: 1;
    height: 208px;
    border: 6px solid #ec6f55;
    border-radius: 12px;
    background: #fff;
    box-shadow: inset 0 0 0 2px #c8c8c8;
}

.stage {
    flex: 1;
    display: flex;
    flex-direction: column;
    border-left: 2px solid #000;
    box-shadow: -7px 0 0 #333;
    margin-left: 7px;
}

.canvas {
    flex: 1;
    padding: 44px 62px 43px 63px;
    display: flex;
    background: #282828;
}

.slide {
    flex: 1;
    display: grid;
    grid-template-columns: 284fr 1725fr 285fr;
    grid-template-rows: 209fr 455fr 10fr 318fr 298fr;
    border: 2px solid #d0d0d0;
    background: #fff;
    box-shadow: 0 0 50px rgba(80, 80, 80, 0.3);
}

.placeholder {
    grid-column: 2;
    background:
        repeating-linear-gradient(90deg, #000 0 2px, transparent 2px 6px) top / 100% 2px no-repeat,
        repeating-linear-gradient(90deg, #000 0 2px, transparent 2px 6px) bottom / 100% 2px no-repeat,
        repeating-linear-gradient(#000 0 2px, transparent 2px 6px) left / 2px 100% no-repeat,
        repeating-linear-gradient(#000 0 2px, transparent 2px 6px) right / 2px 100% no-repeat;
}

.title-box {
    grid-row: 2;
}

.sub-box {
    grid-row: 4;
}

.notes {
    flex: none;
    height: 87px;
    border-top: 2px solid #000;
    padding: 16px 15px;
    line-height: 30px;
    font-family: "Liberation Sans", Arial, sans-serif;
    font-size: 26px;
    color: #fff;
    background: #282828;
}

/* Status bar */
.status {
    flex: none;
    height: 46px;
    display: flex;
    align-items: center;
    padding: 0 48px;
    border-top: 1px solid #000;
    background: linear-gradient(#4a4a4a, #3a3a3a);
    color: #f7f7f7;
    font-size: 24px;
}

.slide-count {
    width: 162px;
}

.lang {
    margin-right: 37px;
}

.a11y {
    gap: 2px;
}

.status-right {
    margin-left: auto;
    height: 100%;
    display: flex;
    align-items: center;
}

.st {
    gap: 8px;
}

.notes-btn {
    margin-right: 40px;
}

.comments-btn {
    margin-right: 20px;
}

.view {
    width: 72px;
    height: 100%;
}

.view.on {
    width: 74px;
    background: #5e5e5e;
}

.zoom-btn {
    width: 18px;
    margin: 0 13px;
}

.zoom {
    appearance: none;
    width: 200px;
    height: 32px;
}

.zoom::-webkit-slider-runnable-track {
    height: 8px;
    border-radius: 4px;
    background: #767578;
}

.zoom::-webkit-slider-thumb {
    appearance: none;
    width: 32px;
    height: 32px;
    margin-top: -12px;
    border-radius: 50%;
    background: #a3a3a3;
}

.percent {
    margin: 0 38px 0 22px;
}

/* Preferences window */
.dialog {
    position: absolute;
    left: 841px;
    top: 274px;
    width: 1371px;
    border-radius: 20px;
    overflow: hidden;
    background: #241e29;
    box-shadow: inset 0 0 0 2px #5b575f, 0 0 0 1px #000, 0 36px 80px 10px rgba(0, 0, 0, 0.6);
}

.dialog-head {
    height: 105px;
    display: flex;
    align-items: center;
    padding: 0 24px 2px 38px;
    border: 1px solid #77747b;
    border-top-width: 2px;
    border-bottom-color: #000;
    border-bottom-width: 2px;
    border-radius: 20px 20px 0 0;
    background: #39363c;
}

.lights {
    display: flex;
    gap: 16px;
    margin-right: 60px;
}

.light {
    width: 24px;
    height: 24px;
    border-radius: 50%;
    background: #57535b;
}

.light.red {
    background: #ff5f57;
}

.nav-btn {
    color: #c4c3c5;
    margin-right: 54px;
}

.nav-btn.fwd {
    color: #625f66;
}

.nav-btn.grid-btn {
    margin-right: 31px;
}

.dialog-head h2 {
    margin: 0;
    font-size: 29px;
    font-weight: 700;
    color: #e6e5e7;
}

.dialog-search {
    margin-left: auto;
    width: 573px;
    height: 56px;
    display: flex;
    align-items: center;
    gap: 15px;
    padding-left: 19px;
    border: 2px solid #47434b;
    border-radius: 12px;
    color: #b0afb2;
}

.dialog-search input::placeholder {
    color: #716e75;
    opacity: 1;
}

.dialog-body {
    padding: 39px 40px 41px 39px;
}

.segmented {
    position: relative;
    z-index: 1;
    width: fit-content;
    height: 44px;
    margin: 0 auto -24px;
    display: flex;
    border: 1px solid #4a4550;
    border-bottom: 2px solid #58535d;
    border-radius: 10px;
    background: #2f2934;
    font-size: 25px;
    padding: 1px;
}

.seg {
    height: 40px;
    padding: 0 27px 2px 24px;
}

.seg.on {
    padding: 0 23px 2px 24px;
    border-radius: 9px;
    background: #5f5a64;
}

.panel {
    display: grid;
    grid-template-columns: 500px 120px 500px;
    column-gap: 40px;
    justify-content: center;
    padding: 72px 0 42px;
    border: 2px solid #3e3943;
    border-radius: 10px;
    background: #2c2631;
}

.left {
    grid-column: 1;
}

.right {
    grid-column: 3;
}

.col-label {
    grid-row: 1;
    line-height: 32px;
    margin-bottom: 6px;
}

.picker {
    grid-row: 2;
    position: relative;
    margin-bottom: 24px;
}

.picker select {
    appearance: none;
    display: block;
    width: 100%;
    height: 40px;
    padding: 0 48px 2px 16px;
    border-top: 1px solid #7a757e;
    border-radius: 10px;
    background: #625d67;
    font-size: 25px;
}

.stepper {
    position: absolute;
    right: 4px;
    top: 4px;
    width: 32px;
    height: 32px;
    display: flex;
    align-items: center;
    justify-content: center;
    border-radius: 8px;
    background: linear-gradient(#a85b1e, #96501a);
    color: #f2e9e2;
    pointer-events: none;
}

.list {
    list-style: none;
    margin: 0;
    padding: 0;
    border: 2px solid #343434;
    background: #241e29;
    overflow: hidden;
}

.list li {
    height: 48px;
    display: flex;
    align-items: center;
}

.commands {
    grid-row: 3;
    height: 740px;
    padding: 0 18px 0 40px;
}

.ci {
    width: 36px;
    margin-right: 6px;
    display: flex;
    justify-content: center;
    color: #dcdcdc;
}

.more {
    margin-left: auto;
    height: 25px;
    width: 18px;
    display: flex;
    align-items: center;
}

.more::after {
    content: "";
    margin-left: 2px;
    border: 6px solid transparent;
    border-left: 8px solid #b5b5b5;
    border-right: 0;
}

.more.split {
    width: 26px;
    border-left: 1px solid #a5a5a5;
    padding-left: 7px;
}

.combo {
    margin-left: auto;
}

.move {
    grid-column: 2;
    grid-row: 3;
    align-self: center;
    display: flex;
    flex-direction: column;
    gap: 24px;
}

.move button {
    height: 40px;
    border-radius: 10px;
    background: #46414b;
    color: #77737b;
}

.move .flip svg {
    transform: scaleX(-1);
}

.tree-box {
    grid-row: 3;
    height: 740px;
    display: flex;
    flex-direction: column;
}

.tree {
    flex: 1;
    min-height: 0;
    border-bottom: 0;
    display: flex;
    flex-direction: column;
    justify-content: flex-end;
}

.tree li {
    flex: none;
    padding-left: 13px;
    gap: 14px;
}

.tree li svg {
    color: #9d9b9f;
}

.tree li.sub {
    padding-left: 39px;
    gap: 11px;
}

.tree label {
    display: flex;
    align-items: center;
    gap: 5px;
}

.tree input {
    appearance: none;
    width: 28px;
    height: 28px;
    border-top: 1px solid #c08350;
    border-radius: 7px;
    background: linear-gradient(#a2571b, #8e4c1b);
}

.tree input:checked::before {
    content: "";
    display: block;
    width: 11px;
    height: 19px;
    margin: 1px 0 0 8px;
    border: solid #f2e9e2;
    border-width: 0 4px 4px 0;
    border-radius: 2px;
    transform: rotate(36deg);
}

.tree-bar {
    flex: none;
    height: 42px;
    display: flex;
    border: 2px solid #67636b;
    background: linear-gradient(#4c4650, #443f49);
}

.tree-bar button {
    border-right: 2px solid #67636b;
}

.add {
    width: 50px;
}

.tree-bar .remove {
    width: 58px;
    color: #7a767e;
}

.opts {
    width: 64px;
}

.hint {
    grid-row: 4;
    margin: 14px 0 0;
    line-height: 32px;
    font-size: 22px;
    white-space: nowrap;
}

.dialog-actions {
    display: flex;
    justify-content: flex-end;
    gap: 16px;
    margin-top: 16px;
}

.btn {
    width: 140px;
    height: 40px;
    border-top: 1px solid #77737b;
    border-radius: 10px;
    background: #5b5762;
    font-weight: 500;
}

.btn:disabled {
    background: #3b3640;
    border-color: #3f3a44;
    color: #6c6871;
}
```
